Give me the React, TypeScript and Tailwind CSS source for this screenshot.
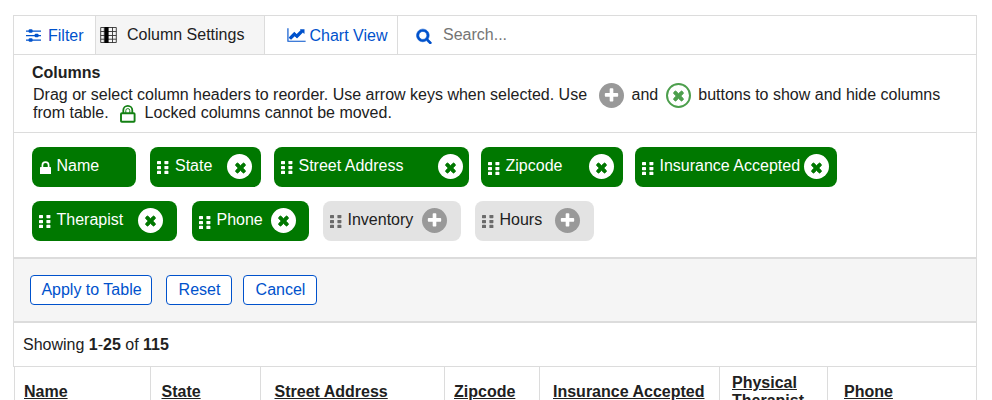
import React from "react";

const TIMES =
  "M1490 1322q0 40-28 68l-136 136q-28 28-68 28t-68-28l-294-294-294 294q-28 28-68 28t-68-28l-136-136q-28-28-28-68t28-68l294-294-294-294q-28-28-28-68t28-68l136-136q28-28 68-28t68 28l294 294 294-294q28-28 68-28t68 28l136 136q28 28 28 68t-28 68l-294 294 294 294q28 28 28 68z";
const PLUS =
  "M1600 736v192q0 40-28 68t-68 28h-416v416q0 40-28 68t-68 28h-192q-40 0-68-28t-28-68v-416h-416q-40 0-68-28t-28-68v-192q0-40 28-68t68-28h416v-416q0-40 28-68t68-28h192q40 0 68 28t28 68v416h416q40 0 68 28t28 68z";

function Glyph({ d, className }: { d: string; className: string }) {
  return (
    <svg viewBox="0 0 1792 1792" className={`shrink-0 ${className}`} fill="currentColor">
      <path d={d} />
    </svg>
  );
}

function Sliders() {
  return (
    <svg width="15" height="13" viewBox="0 0 15 13" fill="#0052cc" className="block">
      <path d="M0 1.4h15v1.3H0zM0 5.9h15v1.3H0zM0 10.4h15v1.3H0z" />
      <rect x="2.6" y="0.3" width="4" height="3.4" rx="1.2" />
      <rect x="8.6" y="4.8" width="4" height="3.4" rx="1.2" />
      <rect x="2.6" y="9.3" width="4" height="3.4" rx="1.2" />
    </svg>
  );
}

function TableIcon() {
  return (
    <svg width="17" height="16" viewBox="0 0 17 16" className="block">
      <path d="M0.7 0.5h15.6v15H0.7zM0.7 4.5h15.6M0.7 8.5h15.6M0.7 12.2h15.6M4.3 0v16M12.5 0v16" fill="none" stroke="#333" strokeWidth="0.9" />
      <path d="M4.6 0h4v16h-4z" fill="#000" />
    </svg>
  );
}

function LineChart() {
  return (
    <svg width="19" height="16" viewBox="0 0 2048 1792" fill="#0052cc" className="block">
      <path d="M2048 1536v128h-2048v-1536h128v1408h1920zm-128-1248v435q0 21-19.5 29.5t-35.5-7.5l-121-121-633 633q-10 10-23 10t-23-10l-233-233-416 416-192-192 585-585q10-10 23-10t23 10l233 233 464-464-121-121q-16-16-7.5-35.5t29.5-19.5h435q14 0 23 9t9 23z" />
      <path d="M256 1270l521-521 256 256 600-600" fill="none" stroke="#0052cc" strokeWidth="290" />
    </svg>
  );
}

function Grip() {
  const rows = [0, 5, 9.8];
  return (
    <svg width="12" height="13" viewBox="0 0 12 13" fill="currentColor" className="block">
      {rows.map((y) => (
        <g key={y}>
          <rect x="0" y={y} width="4" height="3.2" rx="0.6" />
          <rect x="7.4" y={y} width="4" height="3.2" rx="0.6" />
        </g>
      ))}
    </svg>
  );
}

interface ChipProps {
  label: string;
  box: string;
  grip?: string;
  text: string;
  mark?: string;
  locked?: boolean;
  off?: boolean;
}

function Chip({ label, box, grip = "", text, mark = "", locked, off }: ChipProps) {
  return (
    <div
      className={`flex h-10 shrink-0 items-start overflow-hidden rounded-lg ${box} ${
        off ? "bg-[#e3e3e3] text-[#212121]" : "bg-[#007800] text-white"
      }`}
    >
      {locked ? (
        <svg width="11" height="13" viewBox="0 0 11 13" className="mt-[14px] ml-2 block shrink-0">
          <path d="M2.4 7V4.2a3.1 3.1 0 0 1 6.2 0V7" fill="none" stroke="#fff" strokeWidth="1.7" />
          <rect x="0" y="6" width="11" height="7" rx="0.6" fill="#fff" />
        </svg>
      ) : (
        <span className={`w-3 shrink-0 ${grip} ${off ? "text-[#6b6b6b]" : ""}`}>
          <Grip />
        </span>
      )}
      <span className={`mt-[9px] shrink-0 leading-5 whitespace-nowrap ${text}`}>{label}</span>
      {!locked && (
        <span
          className={`mt-[7px] flex size-[25px] shrink-0 items-center justify-center rounded-full ${
            off ? "bg-[#999] text-white" : "bg-white text-[#007800]"
          }`}
        >
          <Glyph d={off ? PLUS : TIMES} className={off ? "size-[17px]" : `size-[15px] stroke-current stroke-[110] ${mark}`} />
        </span>
      )}
    </div>
  );
}

function Head({ label, box }: { label: string; box: string }) {
  return (
    <div className={`shrink-0 border-[#dcdcdc] font-bold ${box}`}>
      <span className="underline">{label}</span>
    </div>
  );
}

function Action({ label, box }: { label: string; box: string }) {
  return (
    <button className={`h-[30px] rounded-[4px] border border-[#0052cc] bg-white pl-px leading-5 text-[#0052cc] ${box}`}>
      {label}
    </button>
  );
}

export default function App() {
  return (
    <div className="h-[400px] w-[992px] overflow-hidden bg-white pt-[15px] pl-[13px] font-['Liberation_Sans',Arial,sans-serif] text-base text-[#212121]">
      <div className="w-[964px] border border-[#dcdcdc]">
        <div className="flex h-[39px] border-b border-[#dcdcdc] leading-5 whitespace-nowrap">
          <div className="flex w-[82px] border-r border-[#dcdcdc] pl-3 text-[#0052cc]">
            <span className="mt-[13px]"><Sliders /></span>
            <span className="mt-[10px] ml-[7px]">Filter</span>
          </div>
          <div className="flex w-[169px] border-r border-[#dcdcdc] bg-[#f5f5f5] pl-1">
            <span className="mt-[11px]"><TableIcon /></span>
            <span className="mt-[9px] ml-[10px]">Column Settings</span>
          </div>
          <div className="flex w-[133px] border-r border-[#dcdcdc] pl-[22px] text-[#0052cc]">
            <span className="mt-[11px]"><LineChart /></span>
            <span className="mt-[10px] ml-[3.5px]">Chart View</span>
          </div>
          <div className="flex pl-[18px]">
            <Glyph
              className="mt-[11.5px] size-4 stroke-current stroke-[70] text-[#0052cc]"
              d="M1216 832q0-185-131.5-316.5t-316.5-131.5-316.5 131.5-131.5 316.5 131.5 316.5 316.5 131.5 316.5-131.5 131.5-316.5zm512 832q0 52-38 90t-90 38q-54 0-90-38l-343-342q-179 124-399 124-143 0-273.5-55.5t-225-150-150-225-55.5-273.5 55.5-273.5 150-225 225-150 273.5-55.5 273.5 55.5 225 150 150 225 55.5 273.5q0 220-124 399l343 343q37 37 37 90z"
            />
            <span className="mt-[9px] ml-[11px] text-[#757575]">Search...</span>
          </div>
        </div>

        <div className="h-[78px] border-b border-[#dcdcdc] pt-2 whitespace-nowrap">
          <div className="pl-[18px] leading-5 font-bold">Columns</div>
          <div className="flex h-[18px] pl-[19px] leading-[24px]">
            <span>Drag or select column headers to reorder. Use arrow keys when selected. Use</span>
            <span className="ml-3 flex size-[25px] shrink-0 items-center justify-center rounded-full bg-[#999] text-white">
              <Glyph d={PLUS} className="size-[17px]" />
            </span>
            <span className="ml-[7.5px]">and</span>
            <span className="ml-[7.5px] flex size-[25px] shrink-0 items-center justify-center rounded-full border-2 border-[#4d9f4d] text-[#4d9f4d]">
              <Glyph d={TIMES} className="size-[15px] stroke-current stroke-[110]" />
            </span>
            <span className="ml-[7.5px]">buttons to show and hide columns</span>
          </div>
          <div className="flex pl-[19px] leading-[24px]">
            <span>from table.</span>
            <svg width="16" height="18" viewBox="0 0 16 18" className="mt-1 ml-[11px] block" fill="none" stroke="#138013">
              <rect x="1" y="8.2" width="13.6" height="8.6" rx="0.8" strokeWidth="1.9" />
              <path d="M3.3 8.4V5.2a4.4 4.2 0 0 1 9 0v3.2" strokeWidth="1.8" />
              <path d="M5.8 8V5.6a2 2 0 0 1 4 0V8" strokeWidth="1" />
            </svg>
            <span className="ml-[9px]">Locked columns cannot be moved.</span>
          </div>
        </div>

        <div className="flex h-[126px] flex-col gap-[14px] border-b-2 border-[#dcdcdc] pt-[14px] pl-[18px]">
          <div className="flex">
            <Chip locked label="Name" box="w-[104px]" text="ml-[5.5px]" />
            <Chip label="State" box="ml-[14px] w-[111px]" grip="ml-[7px] mt-[14px]" text="ml-[6px] w-[52px]" mark="mt-px ml-px" />
            <Chip label="Street Address" box="ml-[13px] w-[195px]" grip="ml-[7px] mt-[14px]" text="ml-[5.5px] w-[139.5px]" mark="mt-px" />
            <Chip label="Zipcode" box="ml-3 w-[142px]" grip="ml-[7px] mt-[15px]" text="ml-[5.5px] w-[83.5px]" mark="mt-px" />
            <Chip label="Insurance Accepted" box="ml-3 w-[202px]" grip="ml-[7px] mt-[15px]" text="ml-[5.5px] w-[144.5px]" mark="mt-px" />
          </div>
          <div className="flex">
            <Chip label="Therapist" box="w-[145px]" grip="ml-[6.5px] mt-[14px]" text="ml-[6px] w-[81.5px]" />
            <Chip label="Phone" box="ml-[15px] w-[117px]" grip="ml-[6.5px] mt-[15px]" text="ml-[6px] w-[54.5px]" />
            <Chip off label="Inventory" box="ml-[14px] w-[138px]" grip="ml-[6.5px] mt-[14px]" text="ml-[6px] w-[74.5px]" />
            <Chip off label="Hours" box="ml-[14px] w-[119px]" grip="ml-[6.5px] mt-[14px]" text="ml-[6px] w-[55.5px]" />
          </div>
        </div>

        <div className="flex h-16 border-b-2 border-[#dcdcdc] bg-[#f5f5f5] pt-4 pl-4">
          <Action label="Apply to Table" box="w-[122px]" />
          <Action label="Reset" box="ml-[14px] w-[66px]" />
          <Action label="Cancel" box="ml-[11px] w-[74px]" />
        </div>

        <div className="h-[43px] pt-3 pl-[9px] leading-5">
          Showing <b>1</b>-<b>25</b> of <b>115</b>
        </div>
      </div>

      <div className="ml-px flex h-[60px] w-[963px] leading-[18px]">
        <Head label="Name" box="w-[137px] border-x pt-4 pl-[9px]" />
        <Head label="State" box="w-[110px] border-r pt-4 pl-[10.5px]" />
        <Head label="Street Address" box="w-[184px] border-r pt-4 pl-[13.5px]" />
        <Head label="Zipcode" box="w-[95px] border-r pt-4 pl-[9px]" />
        <Head label="Insurance Accepted" box="w-[180px] border-r pt-4 pl-[13px]" />
        <Head label="Physical Therapist" box="w-[108px] border-r pt-[7px] pr-2 pl-3" />
        <Head label="Phone" box="w-[149px] border-r pt-4 pl-4" />
      </div>
    </div>
  );
}
